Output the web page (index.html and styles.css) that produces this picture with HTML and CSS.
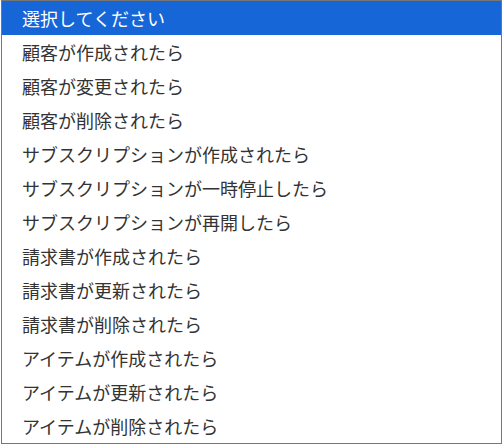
FILE: index.html
```html
<!DOCTYPE html>
<html lang="ja">
<head>
<meta charset="utf-8">
<link rel="stylesheet" href="styles.css">
</head>
<body>
<ul class="list">
  <li class="opt selected">選択してください</li>
  <li class="opt">顧客が作成されたら</li>
  <li class="opt">顧客が変更されたら</li>
  <li class="opt">顧客が削除されたら</li>
  <li class="opt">サブスクリプションが作成されたら</li>
  <li class="opt">サブスクリプションが一時停止したら</li>
  <li class="opt">サブスクリプションが再開したら</li>
  <li class="opt">請求書が作成されたら</li>
  <li class="opt">請求書が更新されたら</li>
  <li class="opt">請求書が削除されたら</li>
  <li class="opt">アイテムが作成されたら</li>
  <li class="opt">アイテムが更新されたら</li>
  <li class="opt">アイテムが削除されたら</li>
</ul>
</body>
</html>
```

FILE: styles.css
```css
html, body {
  margin: 0;
  padding: 0;
  background: #ffffff;
}
.list {
  list-style: none;
  margin: 0 0 0 1px;
  padding: 0;
  width: 501px;
  box-sizing: border-box;
  border: 1px solid #767676;
  font-family: "Noto Sans CJK JP", "Noto Sans", sans-serif;
  font-size: 18px;
  color: #333333;
}
.opt {
  height: 34px;
  line-height: 34px;
  padding-left: 20px;
  white-space: nowrap;
}
.opt.selected {
  background: #1666d8;
  color: #ffffff;
}
```
